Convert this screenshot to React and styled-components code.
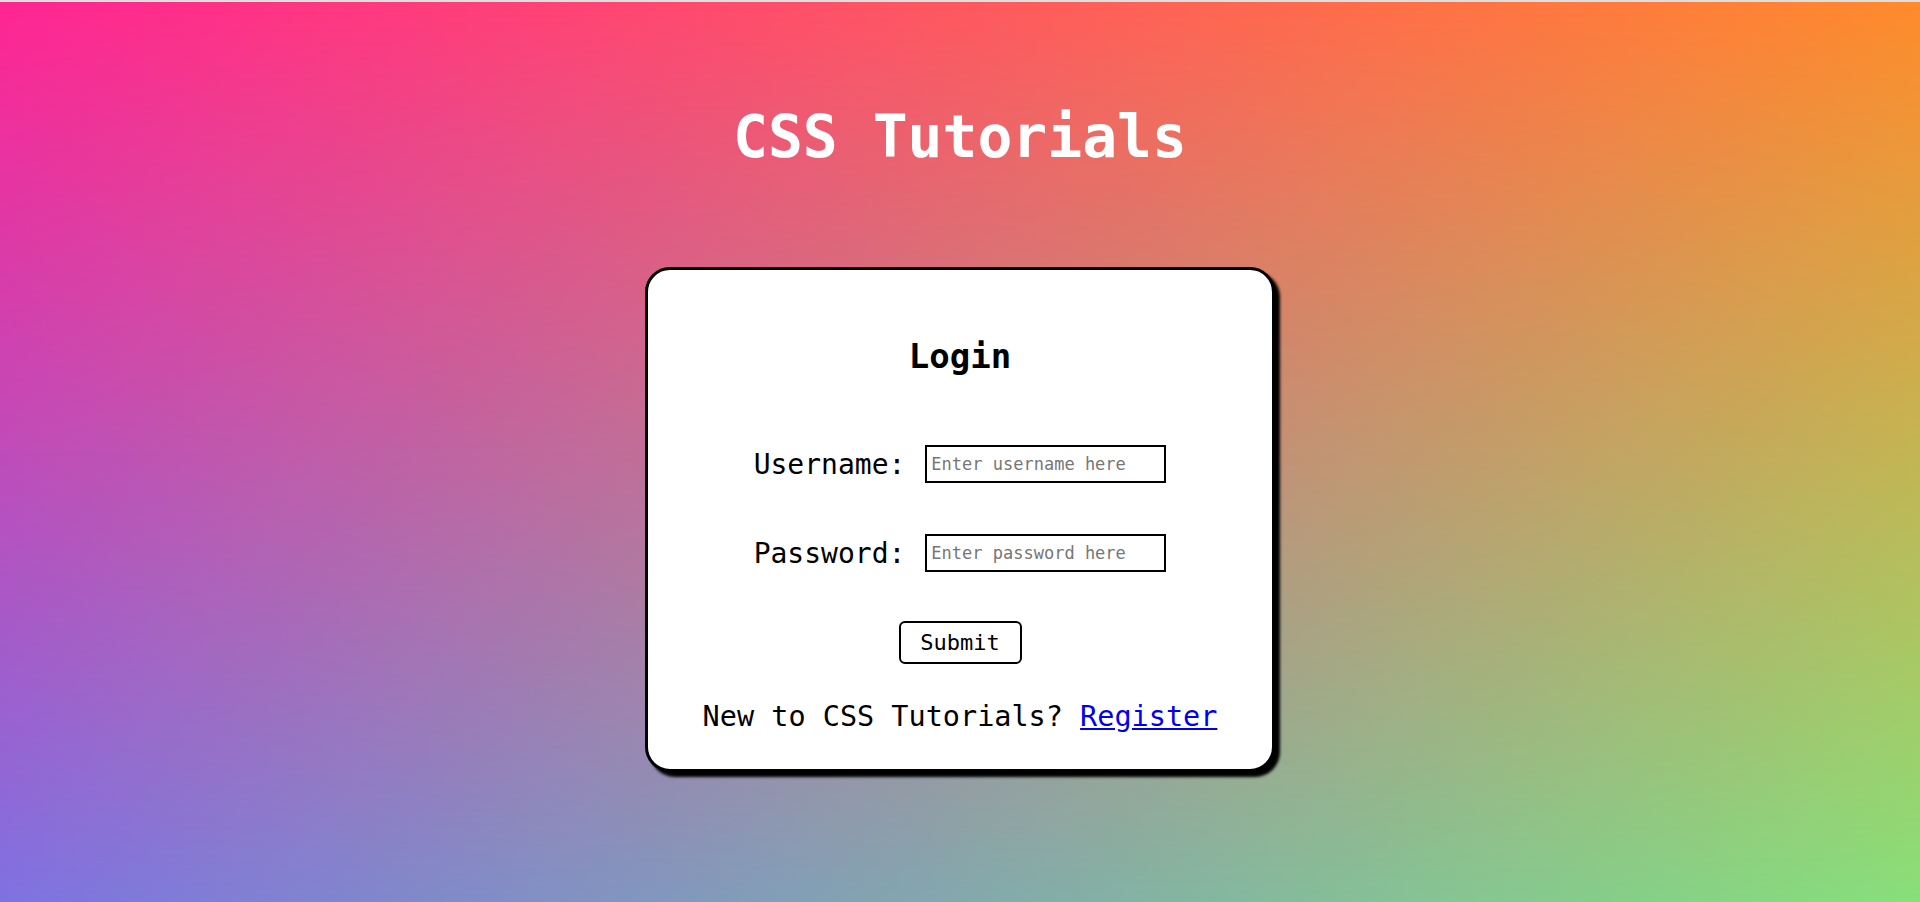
import styled, { createGlobalStyle } from "styled-components";

const GlobalStyle = createGlobalStyle`
  html, body {
    margin: 0;
    padding: 0;
  }
  body {
    font-family: "DejaVu Sans Mono", "Liberation Mono", monospace;
  }
`;

const Page = styled.main`
  position: relative;
  box-sizing: border-box;
  min-height: 100vh;
  border-top: 2px solid #dedede;
  padding-top: 103px;
  display: flex;
  flex-direction: column;
  align-items: center;
  background: linear-gradient(to right, #7f72e2, #88e07a);
  isolation: isolate;

  &::before {
    content: "";
    position: absolute;
    inset: 0;
    z-index: -1;
    background: linear-gradient(to right, #ff2592, #ff8a2c);
    mask-image: linear-gradient(to bottom, #000, transparent);
    -webkit-mask-image: linear-gradient(to bottom, #000, transparent);
  }
`;

const Title = styled.h1`
  margin: 0;
  font-size: 58px;
  line-height: 64px;
  font-weight: bold;
  color: #fff;
`;

const Card = styled.section`
  box-sizing: border-box;
  width: 630px;
  height: 505px;
  margin-top: 98px;
  padding-top: 66px;
  background: #fff;
  border: 3px solid #000;
  border-radius: 25px;
  box-shadow: 5px 5px 3px #000;
  display: flex;
  flex-direction: column;
  align-items: center;
`;

const Heading = styled.h2`
  margin: 0 0 68px;
  font-size: 34px;
  line-height: 40px;
  font-weight: bold;
  color: #000;
`;

const Field = styled.div`
  display: flex;
  align-items: center;
  gap: 20px;
  height: 40px;
  margin-bottom: ${(p) => p.$gap}px;
`;

const Label = styled.label`
  font-size: 28px;
  color: #000;
`;

const Input = styled.input`
  box-sizing: border-box;
  width: 241px;
  height: 38px;
  padding: 0 4px;
  border: 2px solid #000;
  border-radius: 0;
  outline: none;
  font-family: inherit;
  font-size: 17px;
  color: #000;

  &::placeholder {
    color: #767676;
  }
`;

const Button = styled.button`
  box-sizing: border-box;
  width: 123px;
  height: 43px;
  background: #fff;
  border: 2px solid #000;
  border-radius: 6px;
  font-family: inherit;
  font-size: 22px;
  color: #000;
  cursor: pointer;
`;

const Footer = styled.p`
  margin: 36px 0 0;
  font-size: 28.5px;
  line-height: 34px;
  color: #000;

  a {
    color: #0000ee;
    text-decoration: underline;
  }
`;

function App() {
  return (
    <>
      <GlobalStyle />
      <Page>
        <Title>CSS Tutorials</Title>
        <Card>
          <Heading>Login</Heading>
          <Field $gap={49}>
            <Label htmlFor="username">Username:</Label>
            <Input id="username" type="text" placeholder="Enter username here" />
          </Field>
          <Field $gap={48}>
            <Label htmlFor="password">Password:</Label>
            <Input id="password" type="password" placeholder="Enter password here" />
          </Field>
          <Button type="submit">Submit</Button>
          <Footer>
            New to CSS Tutorials? <a href="#register">Register</a>
          </Footer>
        </Card>
      </Page>
    </>
  );
}

export default App;
